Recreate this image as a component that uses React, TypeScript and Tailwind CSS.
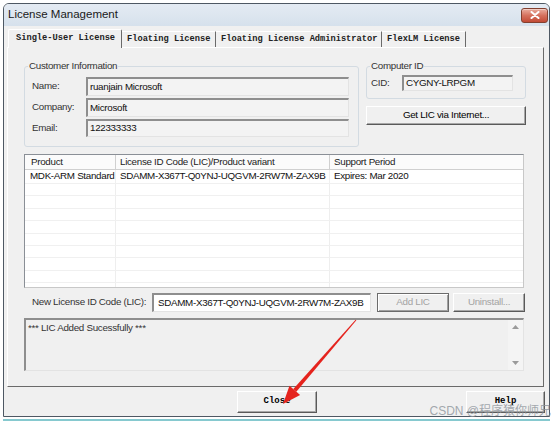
import React from "react";

const sans = "font-['Liberation_Sans',Arial,sans-serif]";
const mono = "font-['Liberation_Mono','Courier_New',monospace]";

function Sunken({ className, children }: { className: string; children?: React.ReactNode }) {
  return (
    <div
      className={`border-t-2 border-l-2 border-r border-b border-t-[#8e8e8e] border-l-[#8e8e8e] border-r-[#e3e3e3] border-b-[#e3e3e3] flex items-center ${className}`}
    >
      {children}
    </div>
  );
}

function Btn({ className, children, disabled, dark }: { className: string; children: React.ReactNode; disabled?: boolean; dark?: boolean }) {
  return (
    <div
      className={`flex items-center justify-center border ${
        dark
          ? "border-[#6b6b6b] shadow-[inset_1px_1px_0_#ffffff,inset_-1px_-1px_0_#a0a0a0]"
          : "border-t-white border-l-white border-r-[#5a5a5a] border-b-[#5a5a5a] shadow-[inset_-1px_-1px_0_#a8a8a8]"
      } bg-[#f0f0f0] ${disabled ? "text-[#a3a3a3]" : "text-black"} ${className}`}
    >
      {children}
    </div>
  );
}

export default function App() {
  const emptyRows = Array.from({ length: 9 });
  return (
    <div className={`relative w-[554px] h-[424px] bg-white overflow-hidden ${sans} text-[9.8px] tracking-[-0.3px] text-[#111]`}>
      {/* window */}
      <div className="ml-[3px] mt-[3px] w-[547px] h-[414px] border border-[#4e5863] rounded-t-[6px] bg-[#f0f0f0] flex flex-col">
        {/* title bar */}
        <div className="h-[22px] shrink-0 flex items-center justify-between pl-[4px] pr-[1px] rounded-t-[5px] bg-gradient-to-b from-[#e4ebf3] to-[#d6e1ec]">
          <span className="text-[11.5px] tracking-normal text-[#1a1a1a]">License Management</span>
          <div className="w-[27px] h-[15px] rounded-[3px] border border-[#83402f] bg-gradient-to-b from-[#e9ad9f] via-[#d5715d] to-[#c24a35] flex items-center justify-center shadow-[inset_0_1px_0_#f3cdc4]">
            <svg width="10" height="8" viewBox="0 0 10 8">
              <path d="M1.5 1 L8.5 7 M8.5 1 L1.5 7" stroke="#ffffff" strokeWidth="2" strokeLinecap="round" />
            </svg>
          </div>
        </div>

        {/* client area */}
        <div className="flex-1 flex flex-col">
          {/* tabs */}
          <div className={`flex items-end h-[21px] pl-[4px] pt-[3px] ${mono} font-bold text-[8.7px] tracking-normal text-[#222]`}>
            <div className="relative z-10 -mb-px h-[19px] w-[114px] pl-[7px] flex items-center border-t border-l border-white border-r border-r-[#6a6a6a] rounded-t-[2px] bg-[#f0f0f0]">
              Single-User License
            </div>
            <div className="h-[16px] w-[94px] pl-[5px] flex items-center border-t border-t-white border-r border-r-[#6a6a6a]">
              Floating License
            </div>
            <div className="h-[16px] w-[166px] pl-[5px] flex items-center border-t border-t-white border-r border-r-[#6a6a6a]">
              Floating License Administrator
            </div>
            <div className="h-[16px] w-[84px] pl-[5px] flex items-center border-t border-t-white border-r border-r-[#6a6a6a]">
              FlexLM License
            </div>
          </div>

          {/* tab panel */}
          <div className="ml-[3px] w-[537px] h-[340px] border-t border-l border-white border-r border-b border-r-[#6a6a6a] border-b-[#6a6a6a] flex flex-col pl-[16px] pt-[12px]">
            {/* top row */}
            <div className="flex gap-[7px]">
              <fieldset className="w-[335px] h-[87px] border border-[#d3dbe2] rounded-[3px]">
                <legend className="ml-[3px] px-[1px] text-[#333] leading-[12px]">Customer Information</legend>
                <div className="flex flex-col gap-[2px] pt-[5px] pl-[7px]">
                  <div className="flex items-center">
                    <span className="w-[54px] text-[#333]">Name:</span>
                    <Sunken className="w-[263px] h-[19px] bg-[#f3f3f3] pl-[2px]">ruanjain Microsoft</Sunken>
                  </div>
                  <div className="flex items-center">
                    <span className="w-[54px] text-[#333]">Company:</span>
                    <Sunken className="w-[263px] h-[19px] bg-[#f3f3f3] pl-[2px]">Microsoft</Sunken>
                  </div>
                  <div className="flex items-center">
                    <span className="w-[54px] text-[#333]">Email:</span>
                    <Sunken className="w-[263px] h-[18px] bg-[#f3f3f3] pl-[2px]">122333333</Sunken>
                  </div>
                </div>
              </fieldset>

              <div className="flex flex-col w-[160px]">
                <fieldset className="w-[160px] h-[39px] border border-[#d3dbe2] rounded-[3px]">
                  <legend className="ml-[3px] px-[1px] text-[#333] leading-[12px]">Computer ID</legend>
                  <div className="flex items-center pt-[3px] pl-[4px]">
                    <span className="w-[31px] text-[#333]">CID:</span>
                    <Sunken className="w-[111px] h-[16px] bg-[#f3f3f3] pl-[2px]">CYGNY-LRPGM</Sunken>
                  </div>
                </fieldset>
                <Btn className="mt-[7px] w-[160px] h-[19px]">Get LIC via Internet...</Btn>
              </div>
            </div>

            {/* license list */}
            <div className="mt-[7px] w-[500px] h-[134px] border border-[#8a8f96] border-r-[#c8c8c8] border-b-[#c8c8c8] bg-white overflow-hidden">
              <div className="flex h-[15px] border-b border-[#d0d0d0] bg-[#fbfbfb] text-[#222]">
                <div className="w-[91px] pl-[6px] flex items-center border-r border-[#d0d0d0]">Product</div>
                <div className="w-[214px] pl-[4px] flex items-center border-r border-[#d0d0d0]">License ID Code (LIC)/Product variant</div>
                <div className="flex-1 pl-[4px] flex items-center">Support Period</div>
              </div>
              <div className="flex h-[14px] border-b border-[#f0f0f0] text-[#111]">
                <div className="w-[91px] pl-[5px] flex items-center border-r border-[#f0f0f0]">MDK-ARM Standard</div>
                <div className="w-[214px] pl-[4px] flex items-center border-r border-[#f0f0f0]">SDAMM-X367T-Q0YNJ-UQGVM-2RW7M-ZAX9B</div>
                <div className="flex-1 pl-[4px] flex items-center">Expires: Mar 2020</div>
              </div>
              {emptyRows.map((_, i) => (
                <div key={i} className="flex h-[12.4px] border-b border-[#f0f0f0]">
                  <div className="w-[91px] border-r border-[#eeeeee]" />
                  <div className="w-[214px] border-r border-[#eeeeee]" />
                  <div className="flex-1" />
                </div>
              ))}
            </div>

            {/* new LIC row */}
            <div className="mt-[5px] flex items-center">
              <span className="w-[128px] pl-[8px] text-[#333]">New License ID Code (LIC):</span>
              <Sunken className="w-[219px] h-[19px] bg-white pl-[4px]">SDAMM-X367T-Q0YNJ-UQGVM-2RW7M-ZAX9B</Sunken>
              <Btn className="ml-[6px] w-[72px] h-[19px]" disabled dark>Add LIC</Btn>
              <Btn className="ml-[4px] w-[72px] h-[19px]" disabled>Uninstall...</Btn>
            </div>

            {/* output */}
            <Sunken className="mt-[6px] w-[500px] h-[53px] bg-[#f0f0f0] !items-stretch">
              <div className="flex-1 pl-[2px] pt-[1px] text-[#333]">*** LIC Added Sucessfully ***</div>
              <div className="w-[15px] flex flex-col items-center justify-between py-[5px] bg-[#f4f4f4]">
                <svg width="7" height="4" viewBox="0 0 7 4"><path d="M0 4 L3.5 0 L7 4 Z" fill="#9a9a9a" /></svg>
                <svg width="7" height="4" viewBox="0 0 7 4"><path d="M0 0 L3.5 4 L7 0 Z" fill="#9a9a9a" /></svg>
              </div>
            </Sunken>
          </div>

          {/* bottom buttons */}
          <div className={`flex mt-[4px] ${mono} font-bold text-[9px] tracking-normal`}>
            <Btn className="ml-[233px] w-[80px] h-[22px]">Close</Btn>
            <Btn className="ml-[149px] w-[79px] h-[22px]">Help</Btn>
          </div>
        </div>
      </div>
      <div className="ml-[3px] mt-[2px] w-[547px] h-[2px] bg-[#86c9cf]" />

      {/* watermark */}
      <div className="absolute right-[3px] bottom-[4px] text-[12px] tracking-normal text-[#8d949b]/80 font-['Liberation_Sans','Noto_Sans_CJK_SC',sans-serif]">
        CSDN @程序猿你师兄
      </div>

      {/* red arrow annotation */}
      <svg className="absolute left-0 top-0 pointer-events-none" width="554" height="424" viewBox="0 0 554 424">
        <path d="M356.4 320.3 L355.6 319.7 L293.3 389.1 L296.3 391.7 Z" fill="#e5231d" />
        <path d="M283 404 L289.5 385.8 L300.1 395 Z" fill="#e5231d" />
      </svg>
    </div>
  );
}
